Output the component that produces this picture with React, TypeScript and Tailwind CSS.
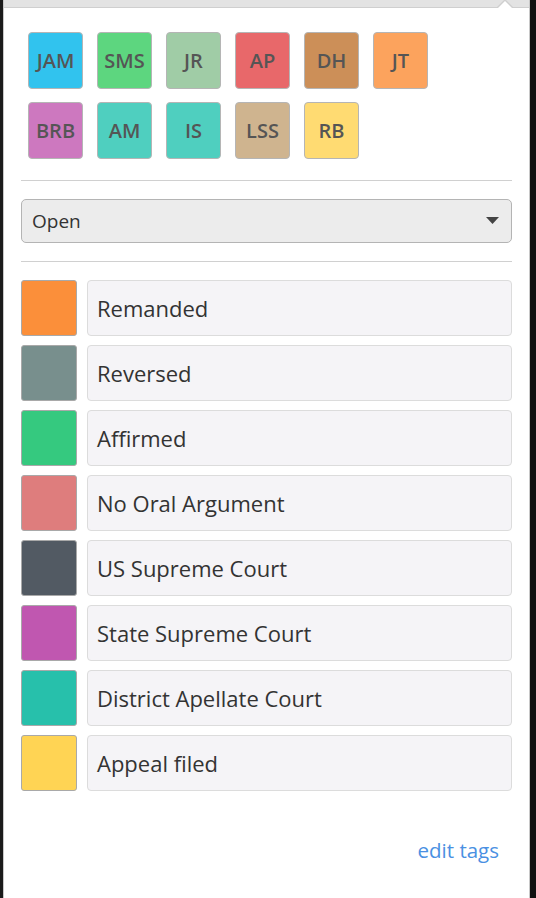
import React from 'react';

const people = [
    { initials: 'JAM', color: 'bg-[#31c3ee]' },
    { initials: 'SMS', color: 'bg-[#5dd67f]' },
    { initials: 'JR', color: 'bg-[#a0cca6]' },
    { initials: 'AP', color: 'bg-[#e8686a]' },
    { initials: 'DH', color: 'bg-[#cc8f58]' },
    { initials: 'JT', color: 'bg-[#fca35d]' },
    { initials: 'BRB', color: 'bg-[#cd78bf]' },
    { initials: 'AM', color: 'bg-[#4fcfbf]' },
    { initials: 'IS', color: 'bg-[#4fcfbf]' },
    { initials: 'LSS', color: 'bg-[#cfb48f]' },
    { initials: 'RB', color: 'bg-[#ffdb72]' },
];

const tags = [
    { label: 'Remanded', color: 'bg-[#fb8f3a]' },
    { label: 'Reversed', color: 'bg-[#788f8d]' },
    { label: 'Affirmed', color: 'bg-[#35c97f]' },
    { label: 'No Oral Argument', color: 'bg-[#de7d7d]' },
    { label: 'US Supreme Court', color: 'bg-[#525a63]' },
    { label: 'State Supreme Court', color: 'bg-[#c057b0]' },
    { label: 'District Apellate Court', color: 'bg-[#27c0ab]' },
    { label: 'Appeal filed', color: 'bg-[#ffd454]' },
];

export default function App() {
    return (
        <div
            className="flex h-[898px] w-[536px] bg-[#111] overflow-hidden"
            style={{ fontFamily: '"Open Sans", "Noto Sans", sans-serif' }}
        >
            {/* left window edge */}
            <div className="w-[3px] bg-[#1b1b1b]" />

            {/* popover */}
            <div className="flex flex-col w-[527px] bg-white border-l border-r border-[#c8c8c8]">
                {/* top bar with caret */}
                <div className="relative h-[8px] bg-[#e3e3e3] border-b border-[#cfcfcf] shrink-0">
                    <div className="absolute right-[16px] top-[-1px] w-0 h-0 border-l-[8px] border-r-[8px] border-b-[8px] border-l-transparent border-r-transparent border-b-[#cfcfcf]" />
                    <div className="absolute right-[17px] top-[1px] w-0 h-0 border-l-[7px] border-r-[7px] border-b-[7px] border-l-transparent border-r-transparent border-b-white" />
                </div>

                <div className="flex flex-col px-[17px] flex-1">
                    {/* people */}
                    <div className="flex flex-wrap w-[440px] gap-x-[14px] gap-y-[13px] pl-[7px] pt-[24px] pb-[21px]">
                        {people.map(p => (
                            <button
                                key={p.initials}
                                className={`${p.color} w-[55px] h-[57px] rounded-[4px] border border-[#b5b5b5] text-[#555] text-[20px] font-semibold flex items-center justify-center`}
                            >
                                {p.initials}
                            </button>
                        ))}
                    </div>

                    <div className="h-px bg-[#d0d0d0]" />

                    {/* status select */}
                    <div className="pt-[18px] pb-[18px]">
                        <div className="flex items-center justify-between h-[44px] px-[10px] rounded-[5px] border border-[#b4b4b4] bg-[#ececec] text-[#333] text-[19px]">
                            <span>Open</span>
                            <svg width="13" height="8" viewBox="0 0 13 8" className="mr-[2px]">
                                <path d="M0 0 L13 0 L6.5 7 Z" fill="#444" />
                            </svg>
                        </div>
                    </div>

                    <div className="h-px bg-[#d0d0d0]" />

                    {/* tags */}
                    <div className="flex flex-col gap-[9px] pt-[18px]">
                        {tags.map(t => (
                            <div key={t.label} className="flex gap-[10px] h-[56px]">
                                <div className={`${t.color} w-[56px] h-[56px] rounded-[3px] border border-[#a9a9a9]`} />
                                <div className="flex-1 flex items-center px-[9px] rounded-[4px] border border-[#dcdcdc] bg-[#f5f4f7] text-[#333] text-[22px]">
                                    {t.label}
                                </div>
                            </div>
                        ))}
                    </div>

                    <div className="flex justify-end pt-[44px] pr-[13px]">
                        <a href="#" className="text-[#4a90e2] text-[20.5px]">edit tags</a>
                    </div>
                </div>
            </div>

            {/* right window edge */}
            <div className="flex-1 bg-[#111]" />
        </div>
    );
}
